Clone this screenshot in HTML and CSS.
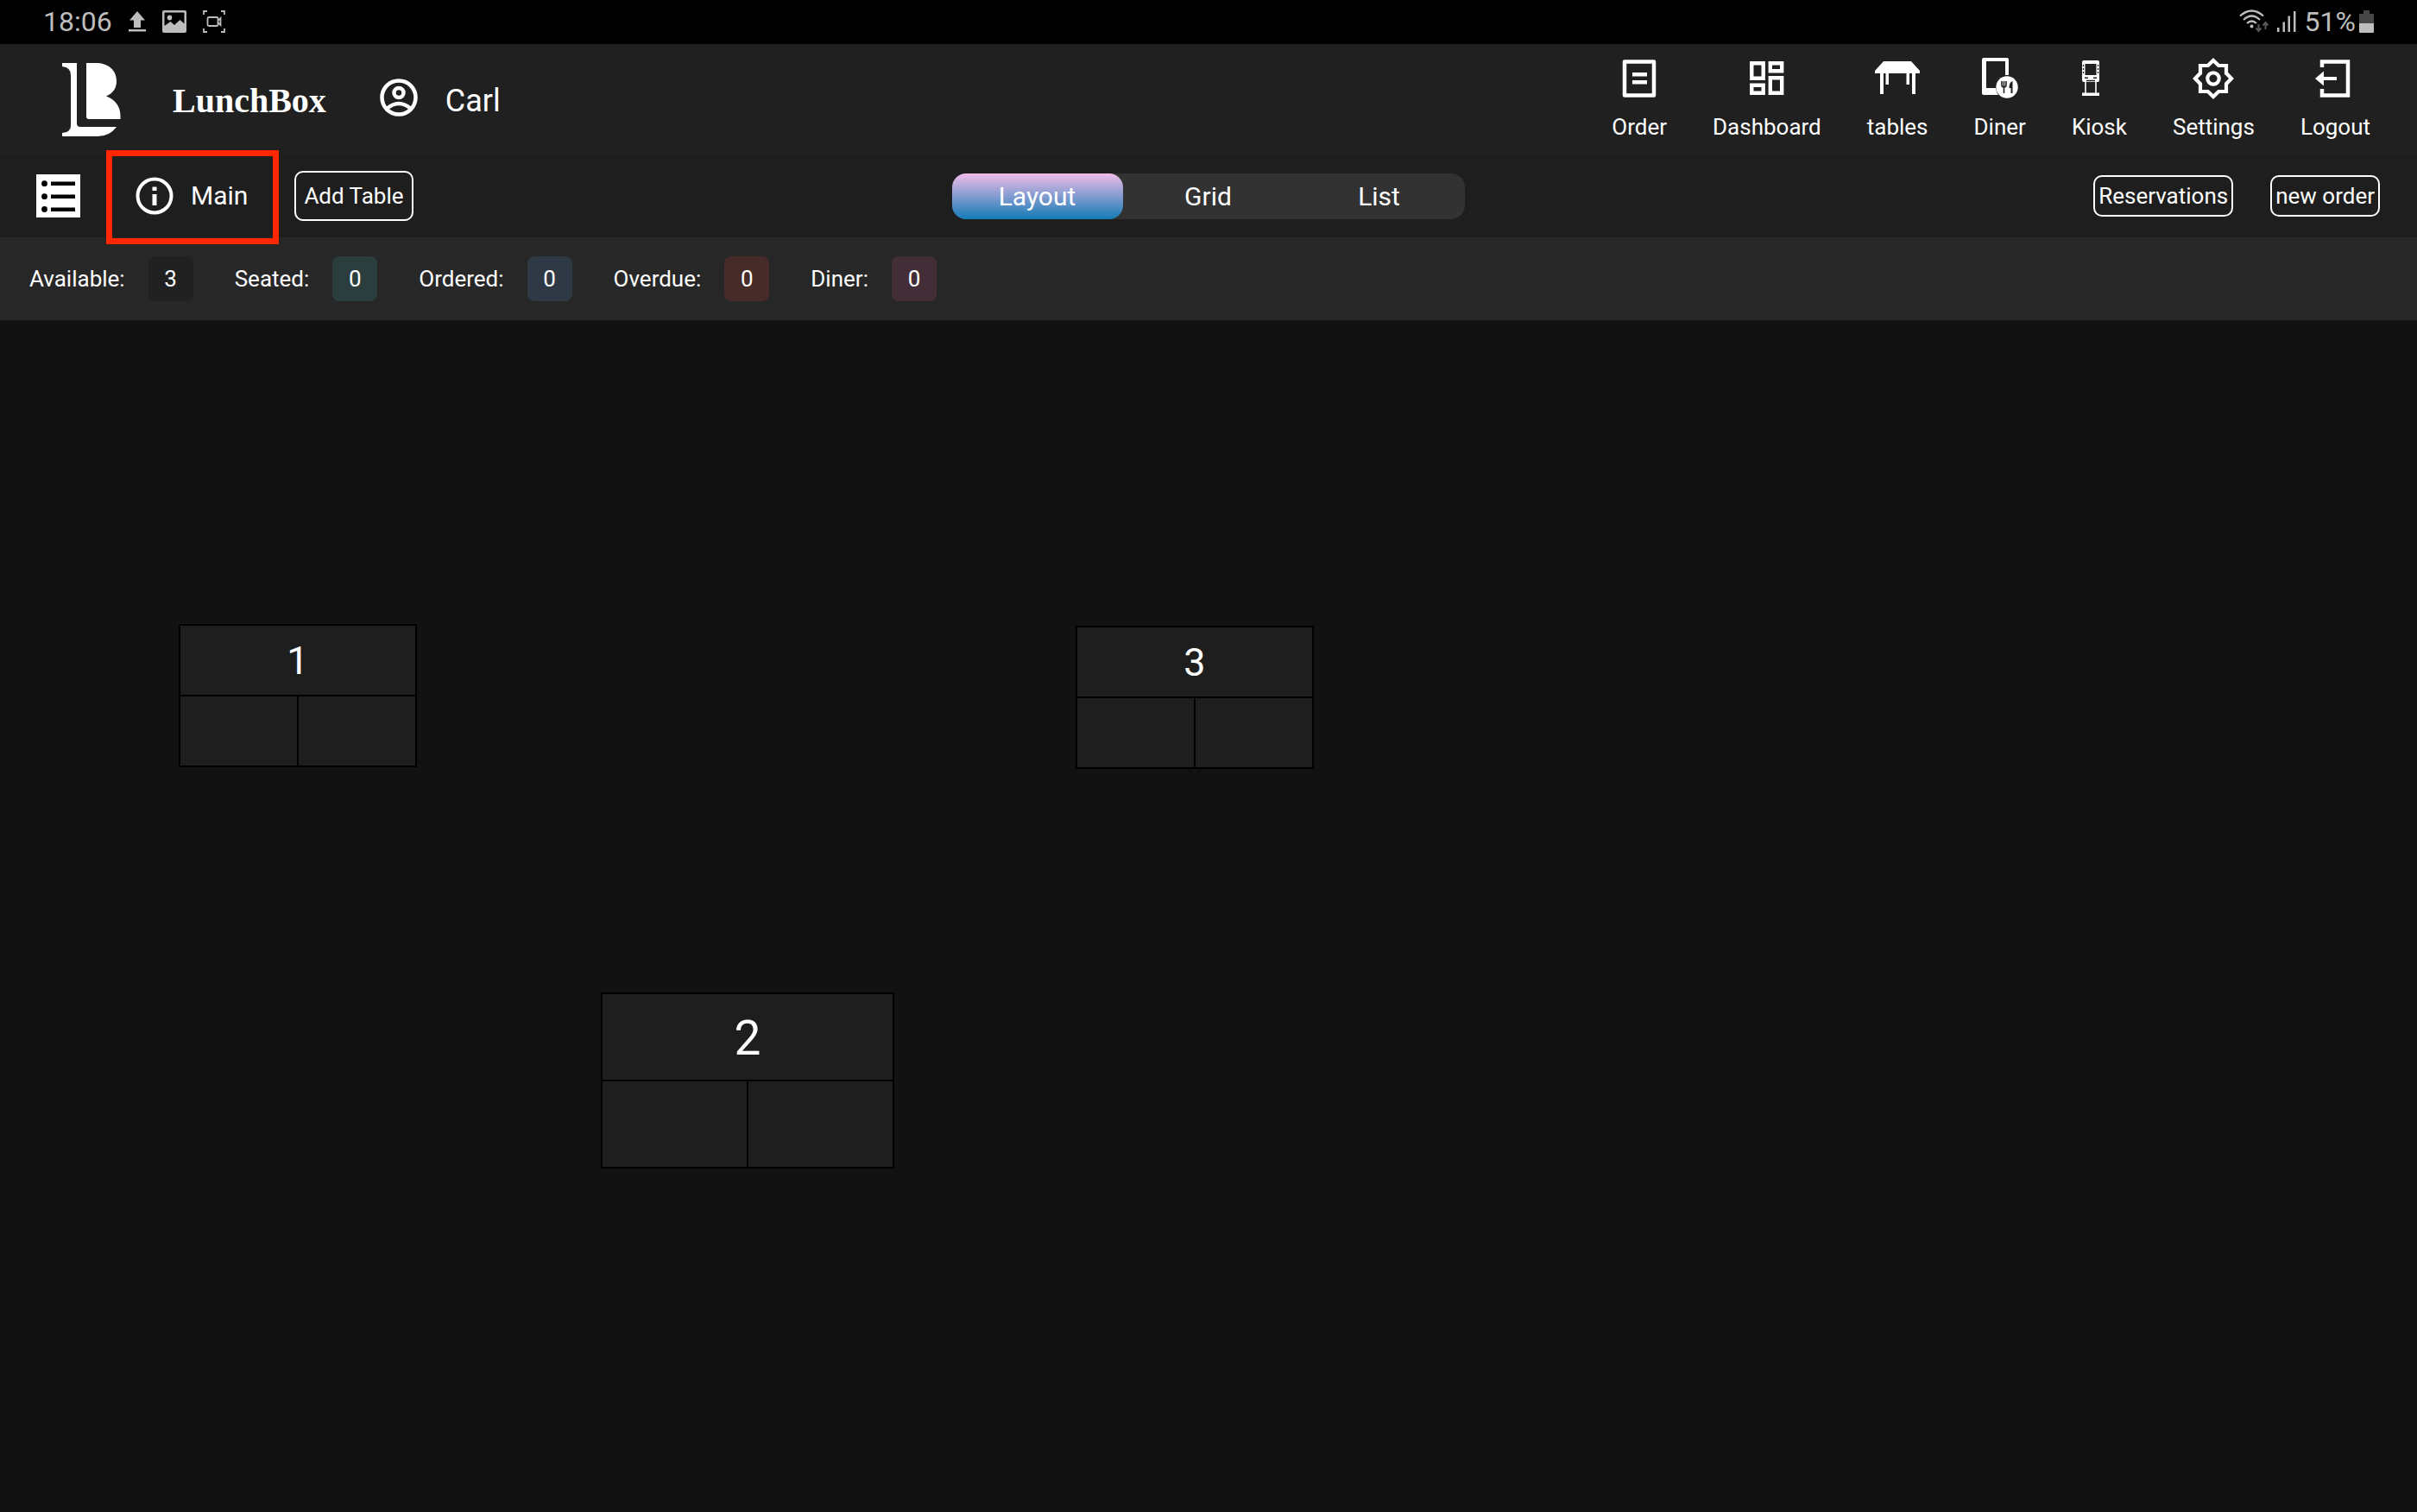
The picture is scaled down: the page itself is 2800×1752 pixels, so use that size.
FILE: index.html
```html
<!DOCTYPE html>
<html lang="en">
<head>
<meta charset="utf-8">
<meta name="viewport" content="width=device-width, initial-scale=1">
<title>LunchBox – Tables</title>
<link rel="stylesheet" href="styles.css">
</head>
<body>
<div class="statusbar">
  <div class="status-group status-left">
    <span>18:06</span>
    <svg width="20" height="26" viewBox="0 0 20 26"><path d="M10 1L19 11.500H14V20H6V11.500H1zM0 22H20V24.500H0z"/></svg>
    <svg width="28" height="26" viewBox="0 0 28 26"><path fill-rule="evenodd" d="M2 0H26a2 2 0 0 1 2 2V24a2 2 0 0 1-2 2H2a2 2 0 0 1-2-2V2A2 2 0 0 1 2 0zM2.500 2.500V18L9.500 13L14 17L20.500 11L25.500 15.500V2.500zM8.500 5.500a2.800 3 0 1 1 0 6a2.800 3 0 1 1 0-6z"/></svg>
    <svg width="26" height="26" viewBox="0 0 26 26"><path d="M1 5V1H5M21 1H25V5M25 21V25H21M5 25H1V21M7 8H16a1.500 1.500 0 0 1 1.500 1.500V16.500A1.500 1.500 0 0 1 16 18H7a1.500 1.500 0 0 1-1.500-1.500V9.500A1.500 1.500 0 0 1 7 8zM17.500 12L20.500 9V17L17.500 14" fill="none" stroke="#bdbdbd" stroke-width="1.800"/></svg>
  </div>
  <div class="status-group status-right">
    <svg width="34" height="28" viewBox="0 0 34 28"><g fill="none" stroke="#bdbdbd" stroke-width="2.200"><path d="M1 7.500Q14.500-4.500 28 7.500"/><path d="M5 12Q14.500 3 24 12"/><path d="M9 16Q14.500 11 20 16"/></g><circle cx="14.500" cy="19.500" r="2"/><path d="M22.500 17V24M19.500 21.500L22.500 25L25.500 21.500M30.500 23V16M27.500 18.500L30.500 15L33.500 18.500" fill="none" stroke="#585858" stroke-width="2"/></svg>
    <svg width="22" height="26" viewBox="0 0 22 26"><path d="M0 20h2.500v5H0zM6.500 13.500h2.500v11.500h-2.500zM12.500 6.500h2.500v18.500h-2.500zM19 1h2.500v24h-2.500z"/></svg>
    <span class="status-battery">51%<svg width="17" height="26" viewBox="0 0 17 26"><path fill="#464646" d="M5 0H12V4H17V15H0V4H5z"/><path d="M0 15H17V25a1 1 0 0 1-1 1H1a1 1 0 0 1-1-1z"/></svg></span>
  </div>
</div>

<header class="header">
  <a class="brand" href="#">
    <svg width="68" height="85" viewBox="0 0 68 85"><path d="M0 0H17V70Q17 74 21 74H63Q55 85 41 85H0V81Q10 80 10 73V14Q10 5 0 4z"/><path d="M28 0H39C53 0 63 8 63 21C63 29 59 35 51 38.500C61 42 67.500 50 67.500 61V65H31Q28 65 28 62z"/></svg>
    <span class="brand-name">LunchBox</span>
  </a>
  <button class="user" type="button">
    <svg width="44" height="44" viewBox="0 0 44 44"><g fill="none" stroke="#fff"><circle cx="22" cy="22" r="19.500" stroke-width="4.500"/><circle cx="22" cy="16.500" r="5.500" stroke-width="4.500"/><path d="M8 35Q22 23 36 35" stroke-width="4.500"/></g></svg>
    <span class="user-name">Carl</span>
  </button>
  <nav class="nav">
    <a class="nav-item" href="#"><svg width="48" height="48" viewBox="0 0 48 48"><path d="M7 4.500H41V43.500H7z" fill="none" stroke="#fff" stroke-width="4.500" stroke-linejoin="round"/><path d="M16 17H33V21.500H16zM16 26H33V30.500H16z"/></svg>Order</a>
    <a class="nav-item" href="#"><svg width="48" height="48" viewBox="0 0 48 48"><path d="M6.300 6.300H19.700V23.700H6.300zM27.800 6.300H41.200V15.200H27.800zM27.800 23.300H41.200V40.700H27.800zM6.300 31.800H19.700V40.700H6.300z" fill="none" stroke="#fff" stroke-width="4.400"/></svg>Dashboard</a>
    <a class="nav-item" href="#"><svg width="52" height="48" viewBox="0 0 52 48"><path d="M10 4H42L52 15V18H47V42H43V18H40V31H36.500V18H16V31H12.500V18H10V42H6V18H0V15z"/></svg>tables</a>
    <a class="nav-item" href="#"><svg width="48" height="48" viewBox="0 0 48 48"><path fill-rule="evenodd" d="M5 0H32a2 2 0 0 1 2 2V20H30V4H8V35H19Q19.500 40 22 43H5a2 2 0 0 1-2-2V2A2 2 0 0 1 5 0z"/><circle cx="32" cy="34" r="12.700"/><path d="M26 27V31.500Q26 34 28.500 34Q31 34 31 31.500V27M28.500 27V41" fill="none" stroke="#202020" stroke-width="1.600"/><path fill="#202020" d="M38.500 41H36.500V35H34.500Q34.500 28 38.500 27z"/></svg>Diner</a>
    <a class="nav-item" href="#"><svg width="48" height="48" viewBox="0 0 48 48"><path fill-rule="evenodd" d="M6 3H22a2 2 0 0 1 2 2V26a2 2 0 0 1-2 2H6a2 2 0 0 1-2-2V5A2 2 0 0 1 6 3zM7.500 7V20H20.500V7zM7 22.500V24H11V22.500zM17 22.500V24H21V22.500z"/><path d="M5.500 8V20M22.500 8V20" stroke="#202020" stroke-width="1.300" stroke-dasharray="2 2"/><path d="M8 28V42M20 28V42" fill="none" stroke="#fff" stroke-width="1.600"/><path d="M9 26.500H19" stroke="#202020" stroke-width="1.500"/><path d="M4 40.500H24V44H4z"/></svg>Kiosk</a>
    <a class="nav-item" href="#"><svg width="48" height="48" viewBox="0 0 48 48"><path d="M24 3L30.200 9H39V17.800L45 24L39 30.200V39H30.200L24 45L17.800 39H9V30.200L3 24L9 17.800V9H17.800z" fill="none" stroke="#fff" stroke-width="4.200"/><circle cx="24" cy="24" r="6.700" fill="none" stroke="#fff" stroke-width="4.200"/></svg>Settings</a>
    <a class="nav-item" href="#"><svg width="48" height="48" viewBox="0 0 48 48"><path d="M9 11V4.500H39V43.500H9V36" fill="none" stroke="#fff" stroke-width="4.500"/><path d="M1 24L11 15.500V22H26V26H11V32.500z"/></svg>Logout</a>
  </nav>
</header>

<div class="toolbar">
  <div class="toolbar-left">
    <button class="menu" type="button" aria-label="Areas"><svg width="51" height="50" viewBox="0 0 51 50"><path d="M0 0H51V50H0z"/><path fill="#000" d="M17 8.500H45V13H17zM17 23.500H45V28H17zM17 38.500H45V43H17z"/><g fill="#000"><circle cx="9.500" cy="10.700" r="3.400"/><circle cx="9.500" cy="25.700" r="3.400"/><circle cx="9.500" cy="40.500" r="3.400"/></g></svg></button>
    <button class="area" type="button"><svg width="44" height="44" viewBox="0 0 44 44"><circle cx="22" cy="22" r="19.500" fill="none" stroke="#fff" stroke-width="4"/><path d="M19.500 11.500H24.500V16H19.500zM19.500 20H24.500V33H19.500z"/></svg>Main</button>
    <button class="outline outline-tall" type="button">Add Table</button>
  </div>
  <div class="segments">
    <button class="segment segment-active" type="button" aria-pressed="true">Layout</button>
    <button class="segment" type="button" aria-pressed="false">Grid</button>
    <button class="segment" type="button" aria-pressed="false">List</button>
  </div>
  <div class="toolbar-right">
    <button class="outline" type="button">Reservations</button>
    <button class="outline" type="button">new order</button>
  </div>
</div>

<div class="counts">
  <div class="count"><span>Available:</span><span class="badge badge-available">3</span></div>
  <div class="count"><span>Seated:</span><span class="badge badge-seated">0</span></div>
  <div class="count"><span>Ordered:</span><span class="badge badge-ordered">0</span></div>
  <div class="count"><span>Overdue:</span><span class="badge badge-overdue">0</span></div>
  <div class="count"><span>Diner:</span><span class="badge badge-diner">0</span></div>
</div>

<main class="floor">
  <button class="table table-1" type="button"><span class="table-name">1</span><span class="cell"></span><span class="cell"></span></button>
  <button class="table table-2" type="button"><span class="table-name">2</span><span class="cell"></span><span class="cell"></span></button>
  <button class="table table-3" type="button"><span class="table-name">3</span><span class="cell"></span><span class="cell"></span></button>
</main>
</body>
</html>
```
FILE: styles.css
```css
* {
  box-sizing: border-box;
}

body {
  display: flex;
  flex-direction: column;
  min-height: 100vh;
  margin: 0;
  background: #121212;
  color: #fff;
  font: 26px/32px Roboto, "Liberation Sans", sans-serif;
}

button {
  margin: 0;
  padding: 0;
  border: 0;
  background: none;
  color: inherit;
  font: inherit;
  cursor: pointer;
}

a {
  color: inherit;
  text-decoration: none;
}

svg {
  display: block;
  flex: none;
  fill: #fff;
}

/* Device status bar */
.statusbar {
  display: flex;
  justify-content: space-between;
  padding: 6px 50px 7px;
  background: #000;
  color: #bdbdbd;
  font-size: 32px;
  line-height: 38px;
}

.statusbar svg {
  fill: #bdbdbd;
}

.status-group {
  display: flex;
  align-items: center;
}

.status-left {
  gap: 19px;
}

.status-right {
  gap: 10px;
}

.status-battery {
  display: flex;
  align-items: center;
  gap: 4px;
}

/* Header */
.header {
  display: flex;
  align-items: center;
  padding: 16px 54px 17px 72px;
  background: #202020;
}

.brand {
  display: flex;
  align-items: center;
  gap: 60px;
  height: 96px;
  font: bold 40px/48px "Liberation Serif", serif;
}

.brand-name {
  padding-top: 4px;
}

.user {
  display: flex;
  align-items: center;
  gap: 32px;
  margin-left: 62px;
  padding-bottom: 4px;
  font-size: 36px;
  line-height: 44px;
}

.user-name {
  padding-top: 8px;
}

.nav {
  display: flex;
  gap: 53px;
  margin-left: auto;
}

.nav-item {
  display: flex;
  flex-direction: column;
  align-items: center;
  gap: 16px;
}

/* Toolbar */
.toolbar {
  display: grid;
  grid-template-columns: 1fr auto 1fr;
  align-items: center;
  padding: 18px 43px 19px 42px;
  background: #1e1e1e;
}

.toolbar-left,
.toolbar-right {
  display: flex;
  align-items: center;
}

.toolbar-right {
  justify-content: flex-end;
  gap: 43px;
}

.area {
  position: relative;
  display: flex;
  align-items: center;
  gap: 20px;
  margin: 0 54px 0 64px;
  font-size: 30px;
  line-height: 36px;
}

/* Highlight frame around the current area */
.area::after {
  content: "";
  position: absolute;
  inset: -31px -36px -34px -34px;
  border: 7px solid #ff2600;
}

.outline {
  padding: 6px 4px;
  border: 2px solid #fff;
  border-radius: 10px;
}

.outline-tall {
  padding: 11px 9px;
}

.segments {
  display: grid;
  grid-template-columns: repeat(3, 198px);
  border-radius: 16px;
  background: #323232;
}

.segment {
  padding: 9px 0 8px;
  border-radius: 16px;
  font-size: 30px;
  line-height: 36px;
}

.segment-active {
  background: linear-gradient(#f2bcea, #137bb6);
}

/* Table counts */
.counts {
  display: flex;
  gap: 48px;
  padding: 22px 34px;
  background: #272727;
}

.count {
  display: flex;
  align-items: center;
  gap: 27px;
}

.badge {
  width: 52px;
  border-radius: 8px;
  line-height: 52px;
  text-align: center;
}

.badge-available {
  background: #212121;
}

.badge-seated {
  background: #2b3e3d;
}

.badge-ordered {
  background: #2f3945;
}

.badge-overdue {
  background: #472b28;
}

.badge-diner {
  background: #432e38;
}

/* Floor plan */
.floor {
  position: relative;
  flex: 1;
}

.table {
  position: absolute;
  display: grid;
  grid-template: 1fr 1fr / 1fr 1fr;
  gap: 2px;
  width: 276px;
  height: 166px;
  border: 2px solid #000;
  background: #000;
  font-size: 45px;
}

.table-name {
  display: flex;
  grid-column: 1 / -1;
  align-items: center;
  justify-content: center;
  padding-top: 2px;
  background: #1e1e1e;
}

.cell {
  background: #1e1e1e;
}

.table-1 {
  left: 207px;
  top: 352px;
}

.table-2 {
  left: 696px;
  top: 779px;
  width: 340px;
  height: 204px;
  font-size: 55px;
}

.table-3 {
  left: 1246px;
  top: 354px;
}
```
